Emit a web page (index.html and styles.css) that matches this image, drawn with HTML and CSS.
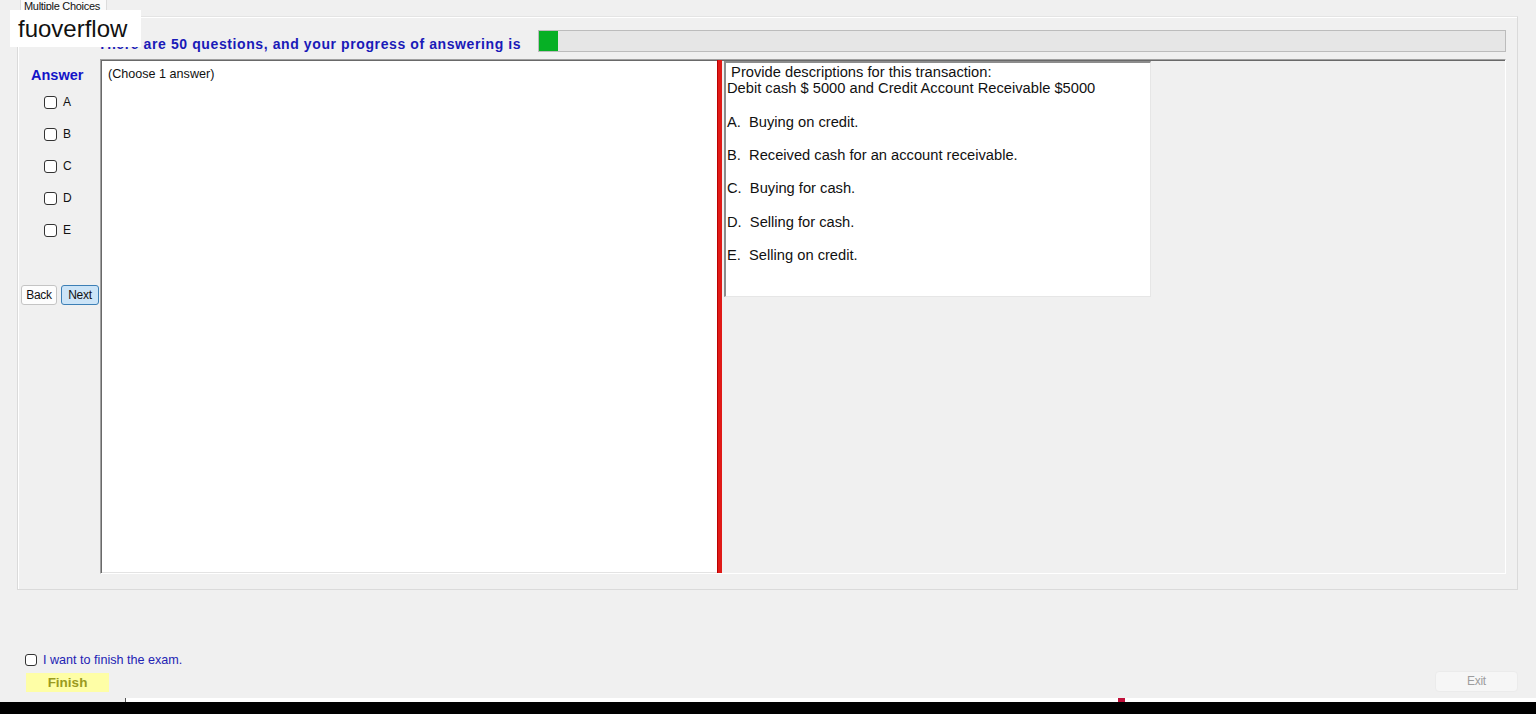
FILE: index.html
```html
<!DOCTYPE html>
<html>
<head>
<meta charset="utf-8">
<title>Multiple Choices</title>
<link rel="stylesheet" href="styles.css">
</head>
<body>
<div class="screen">
  <div class="tabstrip">
    <div class="tab">Multiple Choices</div>
  </div>
  <div class="tabpage">
    <div class="header">
      <div class="heading">There are 50 questions, and your progress of answering is</div>
      <div class="progress"><div class="progress-fill" style="width:19px"></div></div>
    </div>
    <div class="main">
      <div class="sidebar">
        <div class="answer-title">Answer</div>
        <div class="choices">
          <label class="choice"><span class="box"></span>A</label>
          <label class="choice"><span class="box"></span>B</label>
          <label class="choice"><span class="box"></span>C</label>
          <label class="choice"><span class="box"></span>D</label>
          <label class="choice"><span class="box"></span>E</label>
        </div>
        <div class="nav">
          <button class="btn back">Back</button>
          <button class="btn next">Next</button>
        </div>
      </div>
      <div class="panel">
        <div class="left-pane">(Choose 1 answer)</div>
        <div class="splitter"></div>
        <div class="right-pane">
          <div class="question">
            <div class="q-line">&nbsp;Provide descriptions for this transaction:</div>
            <div class="q-line">Debit cash $ 5000 and Credit Account Receivable $5000</div>
            <div class="opt first">A.&nbsp; Buying on credit.</div>
            <div class="opt">B.&nbsp; Received cash for an account receivable.</div>
            <div class="opt">C.&nbsp; Buying for cash.</div>
            <div class="opt">D.&nbsp; Selling for cash.</div>
            <div class="opt">E.&nbsp; Selling on credit.</div>
          </div>
        </div>
      </div>
    </div>
  </div>
  <div class="footer">
    <div class="finish-group">
      <label class="finish-check"><span class="box"></span>I want to finish the exam.</label>
      <div class="finish-btn">Finish</div>
    </div>
    <div class="exit-btn">Exit</div>
  </div>
  <div class="strip"><span class="strip-mark"></span></div>
  <div class="blackbar"></div>
  <div class="watermark">fuoverflow</div>
</div>
</body>
</html>
```

FILE: styles.css
```css
* { box-sizing: border-box; }
html, body { margin: 0; padding: 0; }
body {
  background: #f0f0f0;
  font-family: "Liberation Sans", Arial, sans-serif;
  color: #000;
  width: 1536px;
  height: 714px;
  overflow: hidden;
}
.screen {
  position: relative;
  display: flex;
  flex-direction: column;
  height: 714px;
}
.tabstrip {
  height: 16px;
  display: flex;
  padding-left: 20px;
}
.tab {
  background: #fafafa;
  border: 1px solid #dcdcdc;
  border-top: none;
  border-bottom: none;
  height: 16px;
  padding: 0 6px 0 3px;
  font-size: 11px;
  line-height: 12px;
  letter-spacing: -0.3px;
  color: #111;
  overflow: hidden;
}
.tabpage {
  margin-left: 17px;
  width: 1501px;
  height: 574px;
  border: 1px solid #dadada;
  border-top-color: #e4e4e4;
  box-shadow: inset 1px 1px 0 #ffffff;
  display: flex;
  flex-direction: column;
  padding-right: 11px;
}
.header {
  display: flex;
  align-items: center;
  height: 42px;
  padding-top: 3px;
  padding-left: 80px;
}
.heading {
  width: 440px;
  font-size: 14px;
  letter-spacing: 0.6px;
  font-weight: bold;
  color: #1a1ab8;
  white-space: nowrap;
  padding-top: 9px;
}
.progress {
  flex: 1;
  height: 22px;
  margin-top: 3px;
  border: 1px solid #bcbcbc;
  background: #e6e6e6;
}
.progress-fill {
  height: 100%;
  background: #06b025;
}
.main {
  display: flex;
  height: 515px;
}
.sidebar {
  width: 82px;
  display: flex;
  flex-direction: column;
}
.answer-title {
  font-size: 14.5px;
  font-weight: bold;
  color: #1414c8;
  padding-left: 13px;
  margin-top: 8px;
  height: 17px;
  line-height: 17px;
}
.choices {
  display: flex;
  flex-direction: column;
  padding-left: 26px;
  margin-top: 12px;
}
.choice {
  display: flex;
  height: 32px;
  align-items: flex-start;
  font-size: 12px;
  color: #111;
  line-height: 13px;
}
.box {
  display: inline-block;
  width: 13px;
  height: 13px;
  border: 1px solid #333;
  border-radius: 3px;
  background: #fff;
  margin-right: 6px;
  flex: none;
}
.nav {
  display: flex;
  gap: 4px;
  padding-left: 3px;
  margin-top: 29px;
}
.btn {
  font-family: "Liberation Sans", Arial, sans-serif;
  font-size: 12px;
  height: 20px;
  padding: 0;
  border-radius: 3px;
  color: #111;
  letter-spacing: -0.3px;
}
.back {
  width: 36px;
  background: #fdfdfd;
  border: 1px solid #c4c4c4;
}
.next {
  width: 38px;
  background: #cce4f7;
  border: 1px solid #3d7fb5;
}
.panel {
  flex: 1;
  display: flex;
  border: 1px solid #a0a0a0;
  border-right-color: #fff;
  border-bottom-color: #fff;
  box-shadow: inset 1px 1px 0 #696969;
}
.left-pane {
  width: 615px;
  background: #fff;
  margin: 1px 0 0 1px;
  padding: 6px 6px;
  font-size: 12.6px;
  line-height: 14px;
  color: #111;
  border-bottom: 1px solid #e3e3e3;
}
.splitter {
  width: 5px;
  background: #e01a17;
  border-left: 1px solid #b00;
}
.right-pane {
  flex: 1;
  padding: 1px 0 0 2px;
}
.question {
  width: 427px;
  height: 236px;
  background: #fff;
  border-top: 2px solid #8c8c8c;
  border-left: 2px solid #8c8c8c;
  border-right: 1px solid #e6e6e6;
  border-bottom: 1px solid #e6e6e6;
  padding: 2px 1px 1px;
  font-size: 14.7px;
  line-height: 15.5px;
  color: #111;
}
.opt {
  margin-top: 17.8px;
  line-height: 15.5px;
}
.opt.first {
  margin-top: 18.8px;
}
.footer {
  flex: 1;
  display: flex;
  justify-content: space-between;
  align-items: flex-end;
  padding: 0 18px 6px 25px;
}
.finish-group {
  display: flex;
  flex-direction: column;
}
.finish-check {
  display: flex;
  align-items: center;
  font-size: 12.6px;
  color: #2323b4;
  height: 14px;
}
.finish-check .box {
  width: 12px;
  height: 12px;
  margin-right: 6px;
}
.finish-btn {
  margin-top: 6px;
  margin-left: 1px;
  width: 83px;
  height: 19px;
  background: #fefea6;
  color: #9a9a20;
  font-size: 13.5px;
  font-weight: bold;
  text-align: center;
  line-height: 19px;
}
.exit-btn {
  width: 83px;
  height: 21px;
  background: #f6f6f6;
  border: 1px solid #ebebeb;
  border-radius: 4px;
  color: #9d9d9d;
  font-size: 12px;
  text-align: center;
  line-height: 19px;
  letter-spacing: -0.3px;
}
.strip {
  height: 4px;
  margin-left: 125px;
  background: #fff;
  border-left: 1px solid #555;
  position: relative;
}
.strip-mark {
  position: absolute;
  left: 992px;
  top: 0;
  width: 7px;
  height: 4px;
  background: #c0103a;
}
.blackbar {
  height: 12px;
  background: #000;
}
.watermark {
  position: absolute;
  left: 10px;
  top: 10px;
  width: 131px;
  height: 37px;
  background: #fff;
  padding-left: 8px;
  font-size: 24px;
  line-height: 37px;
  color: #111;
}
```
